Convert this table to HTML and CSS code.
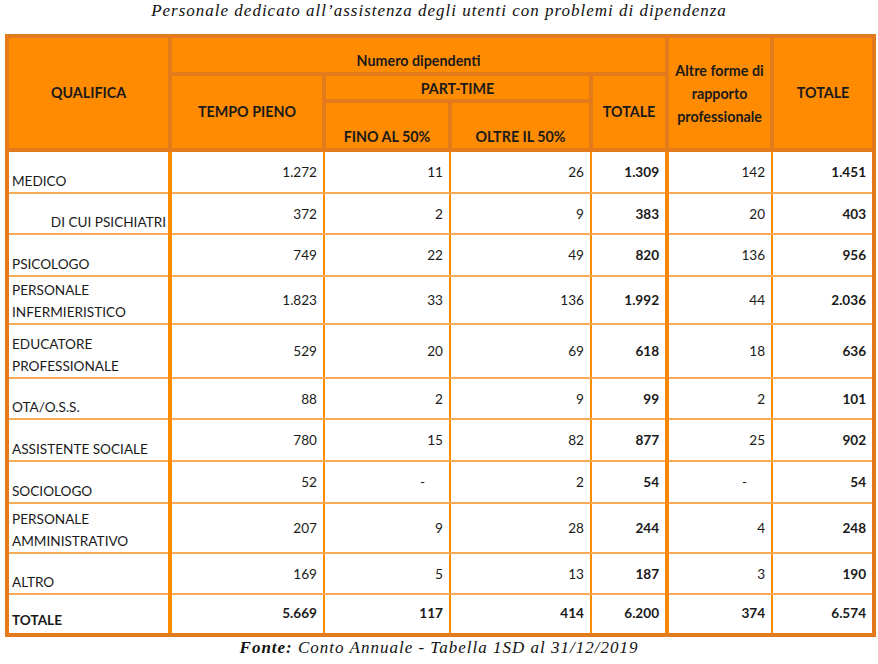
FILE: index.html
```html
<!DOCTYPE html>
<html lang="it">
<head>
<meta charset="utf-8">
<title>Personale dedicato</title>
<link rel="stylesheet" href="styles.css">
</head>
<body>
<div class="title">Personale dedicato all’assistenza degli utenti con problemi di dipendenza</div>
<table class="grid">
  <colgroup>
    <col class="c1"><col class="c2"><col class="c3"><col class="c4"><col class="c5"><col class="c6"><col class="c7">
  </colgroup>
  <thead>
    <tr class="h1">
      <th rowspan="3" class="mid">QUALIFICA</th>
      <th colspan="4" class="bot">Numero dipendenti</th>
      <th rowspan="3" class="mid altre">Altre forme di<br>rapporto<br>professionale</th>
      <th rowspan="3" class="mid">TOTALE</th>
    </tr>
    <tr class="h2">
      <th rowspan="2" class="mid">TEMPO PIENO</th>
      <th colspan="2" class="bot pt">PART-TIME</th>
      <th rowspan="2" class="mid">TOTALE</th>
    </tr>
    <tr class="h3">
      <th class="bot">FINO AL 50%</th>
      <th class="bot">OLTRE IL 50%</th>
    </tr>
  </thead>
  <tbody>
    <tr class="r43"><td class="lbl">MEDICO</td><td>1.272</td><td>11</td><td>26</td><td class="b d5">1.309</td><td>142</td><td class="b last">1.451</td></tr>
    <tr class="r41"><td class="lbl sub">DI CUI PSICHIATRI</td><td>372</td><td>2</td><td>9</td><td class="b d5">383</td><td>20</td><td class="b last">403</td></tr>
    <tr class="r42"><td class="lbl">PSICOLOGO</td><td>749</td><td>22</td><td>49</td><td class="b d5">820</td><td>136</td><td class="b last">956</td></tr>
    <tr class="r48"><td class="lbl">PERSONALE<br>INFERMIERISTICO</td><td>1.823</td><td>33</td><td>136</td><td class="b d5">1.992</td><td>44</td><td class="b last">2.036</td></tr>
    <tr class="r54"><td class="lbl">EDUCATORE<br>PROFESSIONALE</td><td>529</td><td>20</td><td>69</td><td class="b d5">618</td><td>18</td><td class="b last">636</td></tr>
    <tr class="r41"><td class="lbl">OTA/O.S.S.</td><td>88</td><td>2</td><td>9</td><td class="b d5">99</td><td>2</td><td class="b last">101</td></tr>
    <tr class="r42"><td class="lbl">ASSISTENTE SOCIALE</td><td>780</td><td>15</td><td>82</td><td class="b d5">877</td><td>25</td><td class="b last">902</td></tr>
    <tr class="r42"><td class="lbl">SOCIOLOGO</td><td>52</td><td class="dash">-</td><td>2</td><td class="b d5">54</td><td class="dash">-</td><td class="b last">54</td></tr>
    <tr class="r50"><td class="lbl">PERSONALE<br>AMMINISTRATIVO</td><td>207</td><td>9</td><td>28</td><td class="b d5">244</td><td>4</td><td class="b last">248</td></tr>
    <tr class="r41"><td class="lbl">ALTRO</td><td>169</td><td>5</td><td>13</td><td class="b d5">187</td><td>3</td><td class="b last">190</td></tr>
    <tr class="r41 tot"><td class="lbl b">TOTALE</td><td class="b">5.669</td><td class="b">117</td><td class="b">414</td><td class="b d5">6.200</td><td class="b">374</td><td class="b last">6.574</td></tr>
  </tbody>
</table>
<div class="source"><b>Fonte:</b> Conto Annuale - Tabella 1SD al 31/12/2019</div>
</body>
</html>
```
FILE: styles.css
```css
html, body {
  margin: 0;
  padding: 0;
  background: #ffffff;
}

body {
  font-family: Lato, "Open Sans", sans-serif;
  color: #1a1a1a;
}

.title {
  height: 34px;
  line-height: 22px;
  font-family: "Liberation Serif", "Times New Roman", serif;
  font-style: italic;
  font-size: 17px;
  text-align: center;
  letter-spacing: 1px;
  color: #111111;
}

.grid {
  margin-left: 5px;
  width: 871px;
  table-layout: fixed;
  border-collapse: collapse;
  border: 4px solid #e37b1d;
  font-size: 13.6px;
  line-height: 22px;
}

.c1 { width: 163px; }
.c2 { width: 154px; }
.c3 { width: 126px; }
.c4 { width: 141px; }
.c5 { width: 76px; }
.c6 { width: 105px; }
.c7 { width: 102px; }

.grid th {
  background: #ff8c00;
  border: 4px solid #e37b1d;
  font-weight: 700;
  font-size: 14.3px;
  padding: 0 2px;
  text-align: center;
  color: #1a1a1a;
}

.grid th.mid { vertical-align: middle; }
.grid th.bot { vertical-align: bottom; }
.grid th.altre { line-height: 23px; }
.grid th.pt { padding-top: 3px; line-height: 20px; }

.h1 { height: 38px; }
.h2 { height: 27px; }
.h3 { height: 49px; }

.grid td {
  border-left: 2px solid #ff8c00;
  border-right: 2px solid #ff8c00;
  border-top: 2px solid #f8aa55;
  border-bottom: 2px solid #f8aa55;
  padding: 0 6px 0 3px;
  text-align: right;
  vertical-align: middle;
  color: #1a1a1a;
}

.grid td.lbl {
  text-align: left;
  vertical-align: bottom;
  border-left: 4px solid #e37b1d;
  border-right: 4px solid #ff8c00;
  padding: 0 3px 0 3px;
}

.grid td.sub {
  text-align: right;
  padding-right: 2px;
}

.grid td.d5 {
  border-right: 4px solid #fa8806;
}

.grid td.last {
  border-right: 4px solid #e37b1d;
}

.grid td.dash {
  padding-right: 24px;
}

.grid td.b { font-weight: 700; }

.grid tr.tot td {
  border-bottom: 4px solid #e37b1d;
  padding-bottom: 2px;
}

.r41 { height: 41px; }
.r42 { height: 42px; }
.r43 { height: 43px; }
.r48 { height: 48px; }
.r50 { height: 50px; }
.r54 { height: 54px; }

.source {
  line-height: 22px;
  text-align: center;
  font-family: "Liberation Serif", "Times New Roman", serif;
  font-style: italic;
  font-size: 17px;
  letter-spacing: 1px;
  color: #111111;
}
```
